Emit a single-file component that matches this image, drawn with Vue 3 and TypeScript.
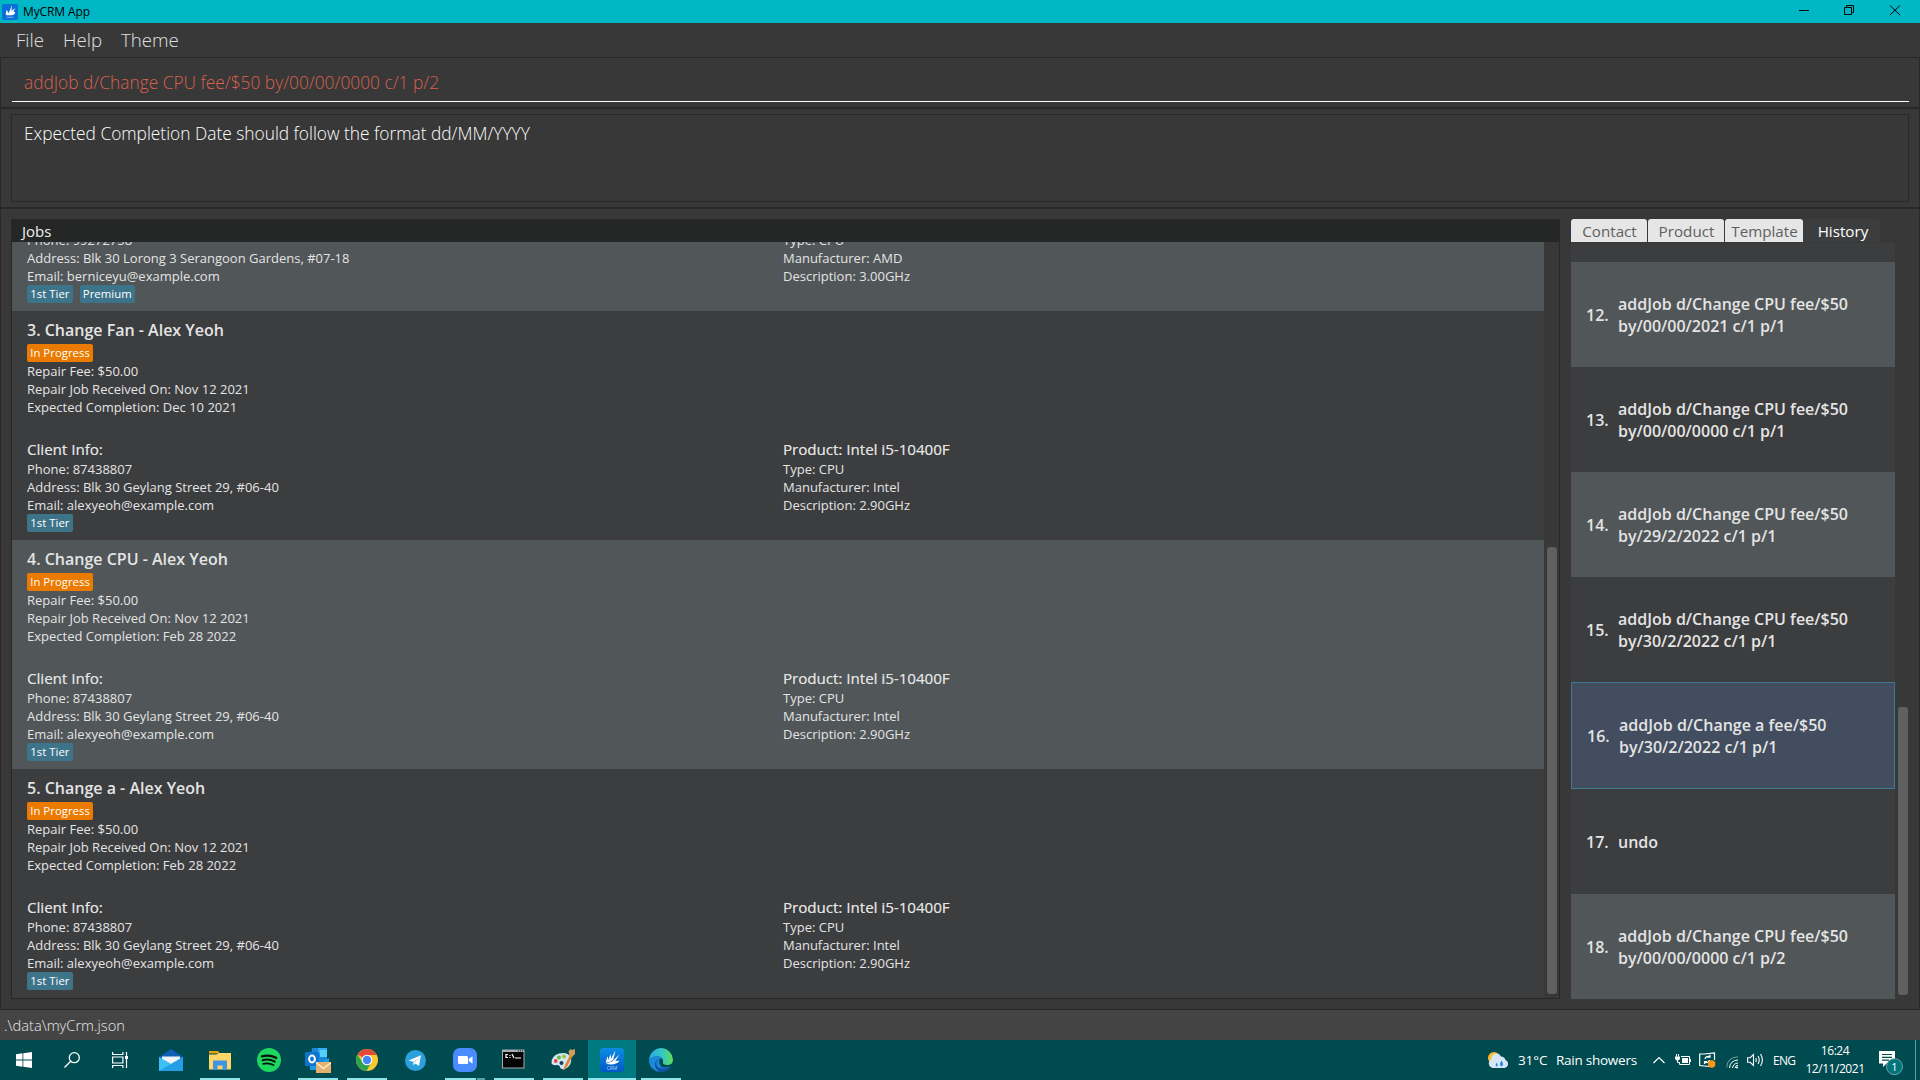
<script setup lang="ts">
interface Job {
  id: number
  title?: string
  received?: string
  due?: string
  phone: string
  address: string
  email: string
  tags: string[]
  product?: string
  type: string
  manufacturer: string
  description: string
}

const alex = {
  phone: '87438807',
  address: 'Blk 30 Geylang Street 29, #06-40',
  email: 'alexyeoh@example.com',
  tags: ['1st Tier'],
  product: 'Intel i5-10400F',
  type: 'CPU',
  manufacturer: 'Intel',
  description: '2.90GHz',
}

const jobs: Job[] = [
  {
    id: 2,
    phone: '99272758',
    address: 'Blk 30 Lorong 3 Serangoon Gardens, #07-18',
    email: 'berniceyu@example.com',
    tags: ['1st Tier', 'Premium'],
    type: 'CPU',
    manufacturer: 'AMD',
    description: '3.00GHz',
  },
  { id: 3, title: 'Change Fan - Alex Yeoh', received: 'Nov 12 2021', due: 'Dec 10 2021', ...alex },
  { id: 4, title: 'Change CPU - Alex Yeoh', received: 'Nov 12 2021', due: 'Feb 28 2022', ...alex },
  { id: 5, title: 'Change a - Alex Yeoh', received: 'Nov 12 2021', due: 'Feb 28 2022', ...alex },
]

interface Entry {
  id: number
  lines: string[]
  selected?: boolean
}

const history: Entry[] = [
  { id: 12, lines: ['addJob d/Change CPU fee/$50', 'by/00/00/2021 c/1 p/1'] },
  { id: 13, lines: ['addJob d/Change CPU fee/$50', 'by/00/00/0000 c/1 p/1'] },
  { id: 14, lines: ['addJob d/Change CPU fee/$50', 'by/29/2/2022 c/1 p/1'] },
  { id: 15, lines: ['addJob d/Change CPU fee/$50', 'by/30/2/2022 c/1 p/1'] },
  { id: 16, lines: ['addJob d/Change a fee/$50', 'by/30/2/2022 c/1 p/1'], selected: true },
  { id: 17, lines: ['undo'] },
  { id: 18, lines: ['addJob d/Change CPU fee/$50', 'by/00/00/0000 c/1 p/2'] },
]
</script>

<template>
  <div class="screen">
    <header class="titlebar">
      <svg class="app-icon" width="16" height="16" viewBox="0 0 24 24">
        <rect width="24" height="24" rx="3" fill="#0a6fd6" />
        <path d="M5.500 15.500L7 8.500l3 5.500L15 2l-.8 8L20 6.500l-3 5 3 1q-1 4.500-6 4.500H7z" fill="#fff" />
        <rect x="7" y="19" width="10" height="2" fill="#5a9fea" />
      </svg>
      <span class="app-name">MyCRM App</span>
      <svg class="win-controls" width="138" height="23" viewBox="0 0 138 23" fill="none" stroke="#000" stroke-width="1">
        <path d="M17 10.500h10" />
        <path d="M62.500 7.500h7v7h-7zM64.500 7.500v-2h7v7h-2" />
        <path d="M108 5.500l10 9.500M118 5.500l-10 9.500" />
      </svg>
    </header>

    <nav class="menubar">
      <span class="m-file">File</span>
      <span class="m-help">Help</span>
      <span class="m-theme">Theme</span>
    </nav>

    <main class="content">
      <section class="command">
        <div class="command-field"><span>addJob d/Change CPU fee/$50 by/00/00/0000 c/1 p/2</span></div>
      </section>

      <section class="result">
        <div class="result-box"><span>Expected Completion Date should follow the format dd/MM/YYYY</span></div>
      </section>

      <section class="panels">
        <div class="jobs">
          <div class="jobs-head">Jobs</div>
          <div class="jobs-body">
            <div class="jobs-list">
              <article v-for="job in jobs" :key="job.id" class="job" :class="{ alt: job.id % 2 === 0 }">
                <template v-if="job.title">
                  <h2>{{ job.id }}. {{ job.title }}</h2>
                  <span class="badge progress">In Progress</span>
                  <p>Repair Fee: $50.00</p>
                  <p>Repair Job Received On: {{ job.received }}</p>
                  <p>Expected Completion: {{ job.due }}</p>
                </template>
                <div class="info">
                  <div>
                    <h3 v-if="job.title">Client Info:</h3>
                    <p>Phone: {{ job.phone }}</p>
                    <p>Address: {{ job.address }}</p>
                    <p>Email: {{ job.email }}</p>
                    <div class="tags"><span v-for="t in job.tags" :key="t" class="badge tier">{{ t }}</span></div>
                  </div>
                  <div>
                    <h3 v-if="job.product">Product: {{ job.product }}</h3>
                    <p>Type: {{ job.type }}</p>
                    <p>Manufacturer: {{ job.manufacturer }}</p>
                    <p>Description: {{ job.description }}</p>
                  </div>
                </div>
              </article>
            </div>
            <div class="track"><div class="thumb jobs-thumb"></div></div>
          </div>
        </div>

        <div class="side">
          <div class="tabs">
            <span class="tab t1">Contact</span>
            <span class="tab t2">Product</span>
            <span class="tab t3">Template</span>
            <span class="tab active">History</span>
          </div>
          <div class="side-body">
            <div class="history">
              <div
                v-for="h in history"
                :key="h.id"
                class="entry"
                :class="{ alt: h.id % 2 === 0, selected: h.selected }"
              >
                <span class="num">{{ h.id }}.</span>
                <div><div v-for="l in h.lines" :key="l">{{ l }}</div></div>
              </div>
            </div>
            <div class="track"><div class="thumb side-thumb"></div></div>
          </div>
        </div>
      </section>
    </main>

    <div class="status"><span>.\data\myCrm.json</span></div>

    <footer class="taskbar">
      <div class="sys">
        <svg width="16" height="16" viewBox="0 0 16 16" fill="#fff">
          <path d="M0 2.300L6.500 1.300V7.500H0zM7.300 1.200L16 0V7.500H7.300zM0 8.400H6.500V14.700L0 13.800zM7.300 8.400H16V16L7.300 14.800z" />
        </svg>
      </div>
      <div class="sys">
        <svg width="16" height="16" viewBox="0 0 16 16" fill="none" stroke="#fff" stroke-width="1.3">
          <circle cx="10.300" cy="5.700" r="5" /><path d="M6.700 9.300L.5 15.500" />
        </svg>
      </div>
      <div class="sys last">
        <svg width="17" height="16" viewBox="0 0 17 16" fill="none" stroke="#fff" stroke-width="1.200">
          <path d="M.6 0v2.500h10.300V0M.6 16v-2.500h10.300V16M.6 5h10.300v6H.6zM14.500 0v16" />
          <rect x="13" y="4" width="3" height="3" fill="#fff" stroke="none" />
        </svg>
      </div>

      <div class="task">
        <svg width="24" height="24" viewBox="0 0 24 24">
          <path d="M0 9L12 1l12 8v3H0z" fill="#0f5fb8" />
          <path d="M3 8.500h18v6L12 18l-9-3z" fill="#f1f5fa" />
          <path d="M0 9l12 7L24 9v14H0z" fill="#35b7f0" />
          <path d="M0 23L14 14.800 24 9v14z" fill="#1e96e4" opacity=".75" />
          <path d="M0 9l12 7-12 7z" fill="#42c6f7" opacity=".6" />
        </svg>
      </div>
      <div class="task open">
        <svg width="24" height="24" viewBox="0 0 24 24">
          <path d="M1 3h9l2 2.500H1z" fill="#e5a50a" />
          <path d="M1 6.500h7.500L11 5h12v16.500H1z" fill="#ffd766" />
          <path d="M5 22v-8.500q0-1 1-1h12q1 0 1 1V22h-4.500v-4.500h-5V22z" fill="#3f94e4" />
        </svg>
      </div>
      <div class="task">
        <svg width="24" height="24" viewBox="0 0 24 24" fill="none" stroke="#05150b" stroke-linecap="round">
          <circle cx="12" cy="12" r="12" fill="#1ed760" stroke="none" />
          <path d="M5 8.300q7.500-2 14.200 1.600" stroke-width="2.400" />
          <path d="M5.600 12.200q6.500-1.700 12.200 1.400" stroke-width="2" />
          <path d="M6.200 15.800q5.500-1.300 10.300 1.200" stroke-width="1.700" />
        </svg>
      </div>
      <div class="task open">
        <svg width="26" height="26" viewBox="0 0 26 26">
          <path d="M7 1h15v16H5z" fill="#1988d9" />
          <path d="M13 1h9v6h-9z" fill="#32aef0" /><path d="M15 3h7v7h-7z" fill="#54d0fb" />
          <path d="M5 13l8 4 11-6v12H5z" fill="#1c9de8" />
          <rect y="5" width="14" height="14" rx="1" fill="#0f74cf" />
          <ellipse cx="7" cy="12" rx="2.900" ry="3.400" fill="none" stroke="#fff" stroke-width="2" />
          <rect x="11" y="15" width="15" height="11" fill="#e5b272" />
          <path d="M11 15.500l7.500 6L26 15.500" fill="none" stroke="#fff4dc" stroke-width="1.200" />
        </svg>
      </div>
      <div class="task open">
        <svg width="22" height="22" viewBox="0 0 22 22">
          <circle cx="11" cy="11" r="11" fill="#fbc92f" />
          <path d="M11 11L1.500 5.500A11 11 0 0 1 20.500 5.500L21 6H11z" fill="#e24b3c" />
          <path d="M1.500 5.500A11 11 0 0 0 10.500 22L15 13.800 6.500 13.500z" fill="#2da14d" />
          <circle cx="11" cy="11" r="5.300" fill="#fff" /><circle cx="11" cy="11" r="4.200" fill="#4386f5" />
        </svg>
      </div>
      <div class="task">
        <svg class="nudge" width="21" height="21" viewBox="0 0 21 21">
          <circle cx="10.500" cy="10.500" r="10.500" fill="#2ba0dc" />
          <path d="M3.500 10.500L16 5.300l-2 10.700-3.600-2.600-1.900 1.900-.6-3.600z" fill="#fff" />
          <path d="M8 11.800L14 7.500 9.300 12.700 8.600 15z" fill="#b5d5e8" />
        </svg>
      </div>
      <div class="task zoomed">
        <svg width="24" height="24" viewBox="0 0 24 24">
          <rect width="24" height="24" rx="7" fill="#4a8cff" />
          <path d="M5 8h8.500q1.500 0 1.500 1.500V16H6.500Q5 16 5 14.500zM15.800 11L19.500 8.200v7.600l-3.700-2.800z" fill="#fff" />
        </svg>
      </div>
      <div class="task open">
        <svg class="nudge2" width="24" height="24" viewBox="0 0 24 24">
          <rect x="1" y="2.500" width="22.500" height="19" fill="#a8acad" />
          <rect x="2" y="5" width="20.500" height="15.500" fill="#050505" />
          <path d="M17 3.800h1M19 3.800h1M21 3.800h1" stroke="#222" />
          <path d="M7 7.500H5v3h2M9 8v1M9 10v1M11 7l2 4M14 11h6" fill="none" stroke="#fff" stroke-width="1.200" />
        </svg>
      </div>
      <div class="task open">
        <svg width="24" height="24" viewBox="0 0 24 24">
          <path d="M.5 15.500Q0 8 8 5.500q9-2 12 4 1.500 8-6 11.500-4 1-5-1.500 0-2.500-3-2.500-4 1-5.500-1.500z" fill="#d2e7f3" />
          <circle cx="4.700" cy="13" r="1.900" fill="#e34b37" /><circle cx="8" cy="9.500" r="1.900" fill="#65b53c" />
          <circle cx="13" cy="8.500" r="1.900" fill="#9fc23a" /><circle cx="10.500" cy="15" r="2" fill="#183e58" />
          <path d="M12 23l2-6 5-10 2.500 1-5 10z" fill="#e2822b" />
          <path d="M18.500 7.500l-1-4 2-2.500 1.500 1 3-1v5l-3 3z" fill="#d69c5e" />
        </svg>
      </div>
      <div class="task current">
        <svg width="24" height="24" viewBox="0 0 24 24">
          <defs><linearGradient id="crm" x2="0" y2="1"><stop stop-color="#0c8ce5" /><stop offset="1" stop-color="#0458c5" /></linearGradient></defs>
          <rect width="24" height="24" rx="3.500" fill="url(#crm)" />
          <path d="M5.700 15L7.300 8.300l1.900 5.200zM9 14.300L15.500 2.500l-2.300 9.300zM11 14.500L19.500 6.500l-4 6.200zM6 16q6-3.500 13.500-3.300-3 3.800-8 3.800z" fill="#fff" />
          <path d="M7.500 14.500L10.500 6l1 7z" fill="#fff" />
          <text x="12" y="21.500" text-anchor="middle" font-size="5" fill="#a8d4ff" font-family="Open Sans, sans-serif">CRM</text>
        </svg>
      </div>
      <div class="task open">
        <svg width="24" height="24" viewBox="0 0 24 24">
          <defs>
            <linearGradient id="e1"><stop stop-color="#2aa9e6" /><stop offset=".55" stop-color="#35c7c5" /><stop offset="1" stop-color="#65db55" /></linearGradient>
          </defs>
          <path d="M0 12A12 12 0 0 0 12 24Q18 24 21.800 18.800H9z" fill="#1470c6" />
          <path d="M.2 10A12 12 0 0 1 24 11.500Q24 17 18 17q-5 0-4-3.500Q14 9 9 8.500 3 8 .2 12z" fill="url(#e1)" />
          <path d="M14 11.500Q13 8.500 9 8.500 3 8 0 12 0 20 8 23.300 12 22 12 16z" fill="#1b8ad8" />
          <path d="M10.500 10.500Q6 13 8 18q3.500 5.500 13.800 .8Q18 24.500 12 24q-6.500-2.500-6-8 .5-4.500 5-5.500z" fill="#124f9e" />
          <path d="M11 10.500q3.300 0 3 3-1 3 2.500 3.600 3 .9 6-.8-.3 1.500-1 2-5 2-8.500.2-4.500-3-2-8z" fill="#004b50" />
        </svg>
      </div>

      <div class="tray">
        <svg class="weather" width="20" height="17" viewBox="0 0 20 17">
          <circle cx="6" cy="6" r="6" fill="#fbbd32" />
          <path d="M4.500 16a4.800 4.800 0 0 1-1-9 5 5 0 0 1 9.500-2.500 5 5 0 0 1 4.500 3.500 4.200 4.200 0 0 1-1 8z" fill="#d6e6f7" />
          <path d="M8.700 10.500q2 3 0 4-2-1 0-4zM13.500 8.500q3 4.500 0 6-3-1.500 0-6z" fill="#248ae0" />
        </svg>
        <span class="temp">31°C</span>
        <span class="cond">Rain showers</span>
        <svg class="chev" width="12" height="8" viewBox="0 0 12 8" fill="none" stroke="#fff" stroke-width="1.200"><path d="M.5 7L6 1.500 11.500 7" /></svg>
        <svg class="bat" width="16" height="12" viewBox="0 0 16 12" fill="none" stroke="#fff">
          <path d="M6 2.500h8.500v8h-10V8" /><rect x="7" y="4" width="6" height="5" fill="#fff" stroke="none" />
          <path d="M15.500 5v3M1.500 0v2.500M3.500 0v2.500M2.500 6v2.500h2" /><path d="M0 2.500h5v2.500l-1.500 1.500h-2L0 5z" fill="#fff" stroke="none" />
        </svg>
        <svg class="upd" width="17" height="16" viewBox="0 0 17 16" fill="none" stroke="#fff" stroke-width="1.200">
          <path d="M15.500 8V.8L5 2H.7v11.500L10 14.500" /><path d="M6 7q.5-3 5-2.500M11 2.700v2.500H8.500M10.500 8q-.5 3-5 2.500M5.500 12V9.500H8" />
          <circle cx="12.700" cy="12" r="3.700" fill="#ff9416" stroke="none" />
        </svg>
        <svg class="wifi" width="13" height="13" viewBox="0 0 13 13" fill="none" stroke="#fff">
          <path d="M.7 11.500Q1 1.500 12 .8" opacity=".45" /><path d="M3.500 12Q4 4.500 12 4" /><path d="M6.500 12Q7 7.500 12 7" /><path d="M9 12q.3-2.500 3-2.700" /><circle cx="11" cy="11.500" r="1" fill="#fff" stroke="none" />
        </svg>
        <svg class="vol" width="17" height="14" viewBox="0 0 17 14" fill="none" stroke="#fff" stroke-width="1.100">
          <path d="M.6 4.700h2.600L6.500 1.500v11L3.200 9.300H.6zM8.700 5q1.200 2 0 4M11 3q2.500 4 0 8M13.500 1q3.800 6 0 12" />
        </svg>
        <span class="eng">ENG</span>
        <div class="clock"><span class="time">16:24</span><span class="date">12/11/2021</span></div>
        <div class="notif">
          <svg width="24" height="25" viewBox="0 0 24 25">
            <path d="M0 0h16v12.500H7.500L4 16v-3.500H0z" fill="#fff" />
            <path d="M3 3.500h10M3 6.300h10M3 9.100h7" stroke="#004b50" stroke-width="1.200" />
            <circle cx="15.500" cy="15.700" r="8" fill="#00757c" stroke="#6fa3a6" stroke-width="1" />
            <text x="15.500" y="19.600" text-anchor="middle" font-size="11" fill="#fff" font-family="Open Sans, sans-serif">1</text>
          </svg>
        </div>
        <div class="peek"></div>
      </div>
    </footer>
  </div>
</template>

<style>
body { margin: 0; overflow: hidden; background: #383838; }
</style>

<style scoped>
* { box-sizing: border-box; }
.screen { width: 1920px; height: 1080px; display: flex; flex-direction: column; background: #383838; font-family: "Open Sans", "Noto Sans", sans-serif; color: #e4e4e4; overflow: hidden; white-space: nowrap; }
svg { display: block; flex: none; }
h2, h3, p { margin: 0; font-weight: 400; }

.titlebar { height: 23px; flex: none; background: #00b7c5; display: flex; align-items: center; color: #000; font-size: 12px; }
.app-icon { margin: 0 0 0 2px; }
.app-name { margin-left: 5px; letter-spacing: -0.1px; line-height: 23px; }
.win-controls { margin-left: auto; margin-right: 0; }

.menubar { height: 34px; flex: none; display: flex; padding-left: 16px; font-size: 18.670px; font-weight: 300; line-height: 34px; color: #e0e0e0; }
.m-file { width: 47px; }
.m-help { width: 58px; }

.content { height: 953px; flex: none; border: 1px solid #282828; display: flex; flex-direction: column; }
.command { height: 51px; flex: none; padding: 0 10px 0 11px; border-bottom: 2px solid #282828; }
.command-field { height: 44px; border-bottom: 1px solid #fff; padding: 10px 0 0 12px; font-size: 17.330px; font-weight: 300; line-height: 29px; color: #d9604d; }
.result { height: 100px; flex: none; padding: 5px 10px 5px 10px; border-bottom: 2px solid #282828; }
.result-box { height: 88px; border: 1px solid #282828; padding: 4px 12px; font-size: 17.330px; font-weight: 300; line-height: 28px; color: #fff; }

.panels { flex: 1; display: flex; padding: 10px 9px 10px 10px; min-height: 0; }
.jobs { width: 1549px; flex: none; height: 780px; border: 1px solid #282828; border-top: 0; display: flex; flex-direction: column; }
.jobs-head { height: 23px; flex: none; background: #252726; font-size: 15px; line-height: 24px; padding-left: 10px; color: #f0f0f0; }
.jobs-body { flex: 1; min-height: 0; display: flex; }
.jobs-list { width: 1532px; display: flex; flex-direction: column; justify-content: flex-end; overflow: hidden; }
.job { flex: none; background: #3c3d3f; padding: 8px 15px; font-size: 13px; line-height: 18px; }
.alt { background: #515658; }
.job h2 { font-size: 16px; font-weight: 600; line-height: 22px; margin-bottom: 3px; }
.job h3 { font-size: 15px; line-height: 20px; margin: 23px 0 1px; letter-spacing: 0.04px; text-shadow: 0.3px 0 0 rgba(228, 228, 228, 0.6); }
.job p { height: 18px; }
.badge { display: block; width: max-content; height: 18px; border-radius: 2px; font-size: 11.330px; letter-spacing: 0.04px; line-height: 18px; padding: 0 3.200px; color: #fff; }
.progress { background: #eb7a00; }
.tier { background: #3e7489; }
.info { display: grid; grid-template-columns: 756px 1fr; }
.tags { display: flex; gap: 7px; }

.track { flex: none; width: 15px; display: flex; flex-direction: column; justify-content: flex-end; align-items: flex-start; padding-left: 3px; }
.thumb { width: 10px; border-radius: 3px; background: #606060; }
.jobs-thumb { height: 447px; margin-bottom: 4px; }

.side { width: 339px; flex: none; margin-left: 11px; display: flex; flex-direction: column; height: 780px; }
.tabs { display: flex; height: 23px; flex: none; gap: 1px; }
.tab { width: 76px; height: 23px; border-radius: 3px 3px 0 0; background: #e6e6e6; color: #606060; font-size: 15.200px; line-height: 25px; text-align: center; padding-left: 1px; }
.tab.t3 { width: 78px; }
.tab.active { width: 77px; margin-left: -1px; background: #3c3d3f; color: #fff; padding-left: 3px; }
.side-body { flex: 1; min-height: 0; display: flex; margin-top: 1px; }
.history { width: 324px; background: #3c3d3f; display: flex; flex-direction: column; justify-content: flex-end; overflow: hidden; }
.entry { height: 105px; flex: none; display: flex; align-items: center; padding-left: 15px; font-size: 16px; font-weight: 600; line-height: 22px; }
.entry.selected { height: 107px; background: #424d5f; border: 1px solid #3e7b91; }
.num { width: 32px; }
.side-thumb { height: 288px; margin-bottom: 4px; }

.status { height: 30px; flex: none; background: #444; padding-left: 4px; font-size: 14.670px; font-weight: 300; line-height: 31px; color: #e8e8e8; }

.taskbar { height: 40px; flex: none; background: #004b50; display: flex; color: #fff; }
.sys { width: 48px; height: 40px; display: flex; align-items: center; justify-content: center; }
.sys.last { width: 51px; padding-right: 3px; }
.task { width: 48px; margin-right: 1px; height: 40px; flex: none; display: flex; align-items: center; justify-content: center; background: linear-gradient(#8fe5ea, #8fe5ea) no-repeat center bottom / 0 2px; }
.task.open { background-size: 40px 2px; }
.task.zoomed { background: linear-gradient(90deg, #8fe5ea 31px, #004b50 31px, #004b50 32px, #5d9fa3 32px) no-repeat center bottom / 40px 2px; }
.task.current { background-color: #007a80; background-size: 48px 2px; }
.nudge { margin-right: 1px; }
.nudge2 { margin-right: 2px; margin-bottom: 2px; }
.tray { margin-left: auto; display: flex; align-items: center; height: 40px; width: 432px; font-size: 12px; }
.weather { margin: 0 10px 0 0; }
.temp { width: 38px; font-size: 13.500px; letter-spacing: -0.1px; }
.cond { width: 97px; font-size: 13.500px; letter-spacing: -0.25px; }
.chev { margin-right: 10px; }
.bat { margin-right: 8px; }
.upd { margin-right: 10px; }
.wifi { margin: 4px 8px 0 0; }
.vol { margin-right: 9px; }
.eng { width: 29px; letter-spacing: -0.7px; }
.clock { width: 66px; display: flex; flex-direction: column; text-align: center; line-height: 18px; height: 40px; padding-top: 2px; align-items: center; letter-spacing: -0.45px; }
.notif { margin-left: 11px; padding-top: 7px; }
.peek { width: 1px; height: 40px; background: #6c999c; margin-left: auto; margin-right: 4px; }
</style>
